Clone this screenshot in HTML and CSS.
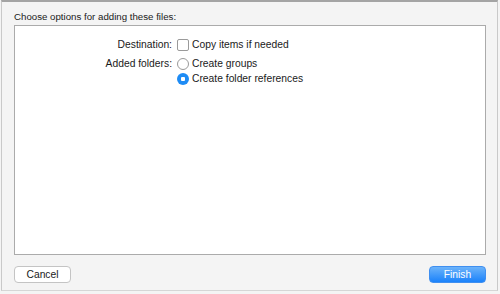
FILE: index.html
```html
<!DOCTYPE html>
<html lang="en">
<head>
  <meta charset="UTF-8" />
  <title>Choose options</title>
  <link rel="stylesheet" href="styles.css">
</head>
<body>
  <div class="sheet">
    <div class="titulo">Choose options for adding these files:</div>
    <div class="caja">
      <div class="fila">
        <div class="etiqueta">Destination:</div>
        <div class="opciones">
          <label class="opcion"><span class="check"></span>Copy items if needed</label>
        </div>
      </div>
      <div class="fila">
        <div class="etiqueta">Added folders:</div>
        <div class="opciones">
          <label class="opcion"><span class="radio"></span>Create groups</label>
          <label class="opcion"><span class="radio activo"></span>Create folder references</label>
        </div>
      </div>
    </div>
    <div class="botones">
      <button class="btn">Cancel</button>
      <button class="btn btn-azul">Finish</button>
    </div>
  </div>
</body>
</html>
```

FILE: styles.css
```css
body {
  margin: 0;
  background: #f4f4f4;
  font-family: "Liberation Sans", Arial, sans-serif;
  font-size: 10.3px;
  color: #1a1a1a;
}
.sheet {
  box-sizing: border-box;
  margin-left: 1px;
  width: 497px;
  height: 291px;
  background: #f4f4f4;
  border-top: 2px solid #a4a4a4;
  border-left: 1px solid #c9c9c9;
  border-right: 1px solid #c9c9c9;
  border-bottom: 1px solid #d6d6d6;
  padding: 0 11px 0 12px;
}
.titulo {
  font-size: 9.7px;
  margin-top: 9px;
  height: 14px;
}
.caja {
  box-sizing: border-box;
  height: 230px;
  background: white;
  border: 1px solid #ababab;
  padding-top: 12px;
}
.fila {
  display: flex;
  margin-bottom: 6px;
}
.etiqueta {
  width: 157px;
  text-align: right;
  padding-right: 5px;
  line-height: 13px;
}
.opciones {
  display: flex;
  flex-direction: column;
  gap: 2px;
}
.opcion {
  display: flex;
  align-items: center;
  line-height: 13px;
  gap: 3px;
}
.check {
  box-sizing: border-box;
  width: 12px;
  height: 12px;
  border: 1px solid #9a9a9a;
  border-radius: 2px;
  background: white;
}
.radio {
  box-sizing: border-box;
  width: 12px;
  height: 12px;
  border: 1px solid #9a9a9a;
  border-radius: 50%;
  background: white;
}
.radio.activo {
  border: none;
  background: radial-gradient(circle, white 0 2px, #1e8cf5 2.5px);
}
.botones {
  display: flex;
  justify-content: space-between;
  margin-top: 11px;
}
.btn {
  width: 57px;
  height: 17px;
  padding: 0;
  font-family: "Liberation Sans", Arial, sans-serif;
  font-size: 10.3px;
  background: white;
  border: 1px solid #c4c4c4;
  border-radius: 4px;
  color: #1a1a1a;
}
.btn-azul {
  background: linear-gradient(#6cb3fa, #1a82fb);
  border-color: #3f8ff0;
  color: white;
}
```
